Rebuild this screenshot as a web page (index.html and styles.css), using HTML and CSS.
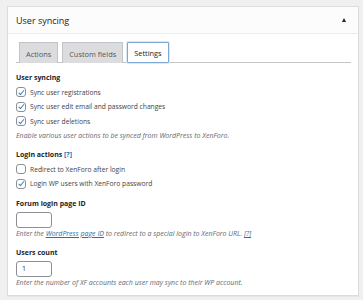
FILE: index.html
```html
<!DOCTYPE html>
<html>
<head>
<meta charset="utf-8">
<link rel="stylesheet" href="styles.css">
</head>
<body>
<div class="postbox">
  <div class="postbox-header">
    <h2 class="postbox-title">User syncing</h2>
    <span class="toggle-arrow"></span>
  </div>
  <div class="inside">
    <div class="tabs">
      <span class="tab">Actions</span>
      <span class="tab">Custom fields</span>
      <span class="tab tab-active">Settings</span>
    </div>
    <div class="section section-first">
      <h3 class="section-title">User syncing</h3>
      <label class="check-row"><span class="cb cb-checked"></span>Sync user registrations</label>
      <label class="check-row"><span class="cb cb-checked"></span>Sync user edit email and password changes</label>
      <label class="check-row"><span class="cb cb-checked"></span>Sync user deletions</label>
      <p class="hint hint-after-rows">Enable various user actions to be synced from WordPress to XenForo.</p>
    </div>
    <div class="section">
      <h3 class="section-title">Login actions <a class="help">[?]</a></h3>
      <label class="check-row"><span class="cb"></span>Redirect to XenForo after login</label>
      <label class="check-row"><span class="cb cb-checked"></span>Login WP users with XenForo password</label>
    </div>
    <div class="section">
      <h3 class="section-title">Forum login page ID</h3>
      <div class="input"></div>
      <p class="hint">Enter the <a class="link">WordPress page ID</a> to redirect to a special login to XenForo URL. <a class="help link">[?]</a></p>
    </div>
    <div class="section">
      <h3 class="section-title">Users count</h3>
      <div class="input">1</div>
      <p class="hint">Enter the number of XF accounts each user may sync to their WP account.</p>
    </div>
  </div>
</div>
</body>
</html>
```
FILE: styles.css
```css
html, body {
  margin: 0;
  padding: 0;
}
body {
  background: #f0f0f1;
  padding: 6px 4px 4px 7px;
  font-family: "Open Sans", "Noto Sans", sans-serif;
  color: #3c434a;
  font-size: 7px;
}
.postbox {
  background: #fff;
  border: 1px solid #dcdcde;
  box-shadow: 0 1px 1px rgba(0,0,0,0.04);
  height: 290px;
  box-sizing: border-box;
}
.postbox-header {
  display: flex;
  align-items: center;
  justify-content: space-between;
  height: 26px;
  border-bottom: 1px solid #ececec;
  background: #fcfcfc;
  padding: 0 12px 0 8px;
}
.postbox-title {
  margin: 0;
  font-size: 9px;
  font-weight: 400;
  color: #1d2327;
}
.toggle-arrow {
  width: 0;
  height: 0;
  border-left: 2.5px solid transparent;
  border-right: 2.5px solid transparent;
  border-bottom: 4px solid #1d2327;
  margin-top: -1px;
}
.inside {
  padding: 8px 7px 0 8px;
}
.tabs {
  display: flex;
  gap: 4px;
  padding-left: 3px;
  border-bottom: 1px solid #c3c4c7;
  height: 20px;
  align-items: flex-end;
}
.tab {
  height: 21px;
  box-sizing: border-box;
  display: flex;
  align-items: center;
  padding: 1px 6px 0;
  background: #dcdcde;
  border: 1px solid #c3c4c7;
  border-bottom: none;
  color: #50575e;
  font-size: 7.4px;
  margin-bottom: -1px;
}
.tab-active {
  background: #fff;
  color: #1d2327;
  border: 1px solid #7fa7d3;
  box-shadow: 0 0 0 1px #dbe8f5;
  border-radius: 1px;
}
.section-first {
  margin-top: 8px;
}
.section + .section {
  margin-top: 6px;
}
.section-title {
  margin: 0;
  line-height: 14px;
  font-size: 7px;
  font-weight: 700;
  color: #1d2327;
}
.check-row {
  display: flex;
  align-items: center;
  gap: 4px;
  height: 14.5px;
  color: #3c434a;
  font-size: 6.7px;
}
.cb {
  width: 10px;
  height: 10px;
  box-sizing: border-box;
  border: 1px solid #8c8f94;
  border-radius: 3px;
  background: #fff;
  position: relative;
  flex: none;
}
.cb-checked::after {
  content: "";
  position: absolute;
  left: 2.5px;
  top: 0.5px;
  width: 2px;
  height: 4.5px;
  border-right: 1.5px solid #3582c4;
  border-bottom: 1.5px solid #3582c4;
  transform: rotate(40deg);
}
.hint {
  margin: 0;
  line-height: 12px;
  font-style: italic;
  color: #646970;
  font-size: 7px;
}
.hint-after-rows {
  margin-top: 1.5px;
}
.help, .link {
  color: #2271b1;
}
.link {
  text-decoration: underline;
}
.input {
  width: 36px;
  height: 16px;
  box-sizing: border-box;
  border: 1px solid #8c8f94;
  border-radius: 3px;
  font-size: 7px;
  line-height: 14px;
  padding: 0 5px;
  color: #2c3338;
  margin-top: 1px;
}
```
